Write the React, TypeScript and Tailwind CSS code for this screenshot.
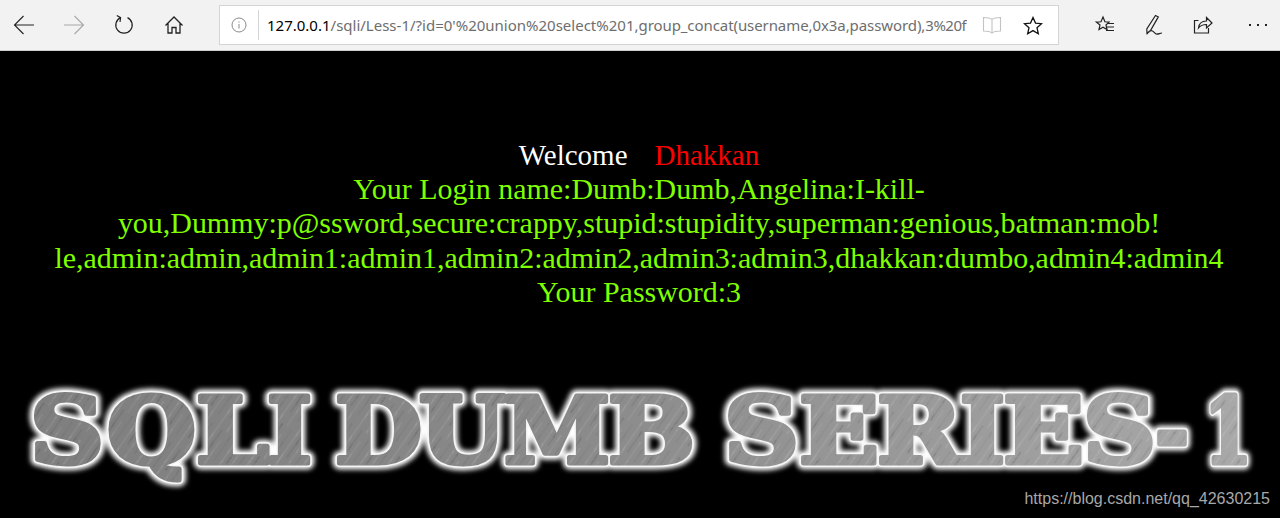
const logoLetters = [
  { c: "S", x: 31, w: 71 },
  { c: "Q", x: 108, w: 86 },
  { c: "L", x: 197, w: 70 },
  { c: "I", x: 268, w: 42 },
  { c: "D", x: 336, w: 84 },
  { c: "U", x: 420, w: 84 },
  { c: "M", x: 505, w: 103 },
  { c: "B", x: 609, w: 84 },
  { c: "S", x: 725, w: 72 },
  { c: "E", x: 800, w: 77 },
  { c: "R", x: 878, w: 82 },
  { c: "I", x: 961, w: 42 },
  { c: "E", x: 1004, w: 78 },
  { c: "S", x: 1084, w: 70 },
  { c: "-", x: 1156, w: 31 },
  { c: "1", x: 1205, w: 45 },
];

function LogoLetters() {
  return (
    <>
      {logoLetters.map((l, i) => (
        <text key={i} x={l.x - 1} y={91} textLength={l.w + 3} lengthAdjust="spacingAndGlyphs">
          {l.c}
        </text>
      ))}
    </>
  );
}

function Logo() {
  return (
    <svg width="1280" height="125" viewBox="0 0 1280 125" className="block">
      <defs>
        <linearGradient id="steel" gradientUnits="userSpaceOnUse" x1="0" y1="0" x2="1280" y2="0">
          <stop offset="0" stopColor="#7e7e7e" />
          <stop offset="0.45" stopColor="#8a8a8a" />
          <stop offset="1" stopColor="#aaaaaa" />
        </linearGradient>
        <pattern id="brush" width="23" height="40" patternUnits="userSpaceOnUse" patternTransform="rotate(35)">
          <line x1="3" y1="0" x2="3" y2="40" stroke="#ffffff" strokeOpacity="0.12" strokeWidth="1" />
          <line x1="8" y1="0" x2="8" y2="26" stroke="#000000" strokeOpacity="0.08" strokeWidth="1.5" />
          <line x1="13" y1="10" x2="13" y2="40" stroke="#ffffff" strokeOpacity="0.1" strokeWidth="1" />
          <line x1="19" y1="0" x2="19" y2="30" stroke="#000000" strokeOpacity="0.06" strokeWidth="1" />
        </pattern>
        <filter id="glow" x="-30%" y="-30%" width="160%" height="160%">
          <feGaussianBlur stdDeviation="2.5" />
        </filter>
      </defs>
      <g fontFamily="'DejaVu Serif', serif" fontWeight="700" fontSize="92" strokeLinejoin="round">
        <g filter="url(#glow)" fill="#ffffff" stroke="#ffffff" strokeWidth="13">
          <LogoLetters />
        </g>
        <g fill="#ffffff" stroke="#f6f6f6" strokeWidth="8">
          <LogoLetters />
        </g>
        <g fill="url(#steel)" stroke="url(#steel)" strokeWidth="5">
          <LogoLetters />
        </g>
        <g fill="url(#brush)" stroke="url(#brush)" strokeWidth="5">
          <LogoLetters />
        </g>
      </g>
    </svg>
  );
}

function ToolButton({ children, w = "w-[50px]" }: { children: React.ReactNode; w?: string }) {
  return <div className={`${w} h-full flex items-center justify-center shrink-0`}>{children}</div>;
}

function Toolbar() {
  return (
    <div className="h-[51px] bg-[#f2f2f2] border-b border-[#cfcfcf] flex items-center -ml-px">
      <ToolButton>
        <svg width="22" height="20" viewBox="0 0 22 20" fill="none" stroke="#222" strokeWidth="1.1">
          <path d="M1.5 10H21M10.5 1L1.5 10l9 9" />
        </svg>
      </ToolButton>
      <ToolButton>
        <svg width="22" height="20" viewBox="0 0 22 20" fill="none" stroke="#a8a8a8" strokeWidth="1.1">
          <path d="M1 10h19.5M11.5 1l9 9-9 9" />
        </svg>
      </ToolButton>
      <ToolButton>
        <svg width="20" height="22" viewBox="0 0 20 22" fill="none" stroke="#222" strokeWidth="1.2">
          <path d="M6.5 3.6A8.2 8.2 0 1 0 13.5 3.6" />
          <path d="M2.8 1.5L6.6 3.6 6 7.8" />
        </svg>
      </ToolButton>
      <ToolButton>
        <svg width="20" height="20" viewBox="0 0 20 20" fill="none" stroke="#222" strokeWidth="1.3">
          <path d="M1.5 10.5L10 2l8.5 8.5M4 8.5V18h4v-5.5h4V18h4V8.5" />
        </svg>
      </ToolButton>

      <div className="w-[840px] h-[40px] ml-[20px] shrink-0 bg-white border border-[#d4d4d4] flex items-center font-['Noto_Sans',sans-serif] text-[15px]">
        <div className="w-[38px] flex justify-center shrink-0">
          <svg width="16" height="16" viewBox="0 0 16 16" fill="none" stroke="#8a8a8a" strokeWidth="1">
            <circle cx="8" cy="8" r="7" />
            <path d="M8 7v4.5M8 4.4v1.2" />
          </svg>
        </div>
        <div className="w-px h-[30px] bg-[#d4d4d4] shrink-0" />
        <div className="w-[700px] ml-[8px] overflow-hidden whitespace-nowrap text-[#6e6e6e] shrink-0">
          <span className="text-black">127.0.0.1</span>
          /sqli/Less-1/?id=0'%20union%20select%201,
          <span className="tracking-[-0.08px]">group_concat(username,0x3a,password),</span>
          <span className="tracking-[-0.5px]">3%20fr</span>
        </div>
        <div className="w-[24px] ml-[13px] flex justify-center shrink-0">
          <svg width="20" height="18" viewBox="0 0 20 18" fill="none" stroke="#c4c4c4" strokeWidth="1.1">
            <path d="M10 3.5C8 1.8 5 1.5 1.5 1.5v13.5c3.5 0 6.500.3 8.500 2 2-1.700 5-2 8.500-2V1.500c-3.500 0-6.500.3-8.500 2zM10 3.500V17" />
          </svg>
        </div>
        <div className="w-[24px] ml-[17px] flex justify-center shrink-0">
          <svg width="20" height="19" viewBox="0 0 20 19" fill="none" stroke="#111" strokeWidth="1.3">
            <path d="M10 1.500l2.500 5.600 6 .6-4.500 4 1.300 6L10 14.600l-5.300 3.100 1.300-6-4.500-4 6-.6z" />
          </svg>
        </div>
      </div>

      <div className="ml-[21px] flex h-full">
        <ToolButton w="w-[49px]">
          <svg width="20" height="20" viewBox="0 0 20 20" fill="none" stroke="#222" strokeWidth="1.2">
            <path d="M8 2l1.900 4.800 4.100.3-3 2.900 1 4.500L8 12.200l-4 2.300 1-4.500-3.500-2.900 4.500-.3z" />
            <path d="M12.500 8.500H19M12 12h7M11 15.500h8" />
          </svg>
        </ToolButton>
        <ToolButton w="w-[49px]">
          <svg width="20" height="22" viewBox="0 0 20 22" fill="none" stroke="#222" strokeWidth="1.2">
            <path d="M11.500 1.500l2.800 1.400L6.500 16.500l-3.500 3-.2-4.500zM3 20c1.500-2.500 3.500-4 5.500-3s2.500 3.500 4.500 3.200 3-1 5-1.200" />
          </svg>
        </ToolButton>
        <ToolButton w="w-[49px]">
          <svg width="20" height="20" viewBox="0 0 20 20" fill="none" stroke="#222" strokeWidth="1.2">
            <path d="M5.500 5.500H1.500v12.500h14v-5" />
            <path d="M5.500 13c.5-5 4-7 8-7V2.500l5.500 5.500-5.500 5V9.500c-3.500 0-6 1-8 3.500z" />
          </svg>
        </ToolButton>
        <ToolButton w="w-[55px]">
          <div className="flex gap-[6px] pl-[6px]">
            <div className="w-[2px] h-[2px] bg-[#222]" />
            <div className="w-[2px] h-[2px] bg-[#222]" />
            <div className="w-[2px] h-[2px] bg-[#222]" />
          </div>
        </ToolButton>
      </div>
    </div>
  );
}

export default function App() {
  return (
    <main className="relative w-[1280px] h-[518px] overflow-hidden bg-black">
      <Toolbar />

      <div className="pt-[87px] pr-[2px] text-center font-['Liberation_Serif',serif] text-[29.95px] leading-[34.2px] text-[#7fff00]">
        <div className="text-[29px]">
          <span className="text-white">Welcome</span>
          <span className="ml-[27px] text-[#ff0000]">Dhakkan</span>
        </div>
        <div>Your Login name:Dumb:Dumb,Angelina:I-kill-</div>
        <div>you,Dummy:p@ssword,secure:crappy,stupid:stupidity,superman:genious,batman:mob!</div>
        <div>le,admin:admin,admin1:admin1,admin2:admin2,admin3:admin3,dhakkan:dumbo,admin4:admin4</div>
        <div>Your Password:3</div>
      </div>

      <div className="mt-[63px]">
        <Logo />
      </div>

      <div className="absolute right-[10px] bottom-[9px] font-['Liberation_Sans',sans-serif] text-[16px] leading-[20px] text-[#a8a8a8]">
        https://blog.csdn.net/qq_42630215
      </div>
    </main>
  );
}
